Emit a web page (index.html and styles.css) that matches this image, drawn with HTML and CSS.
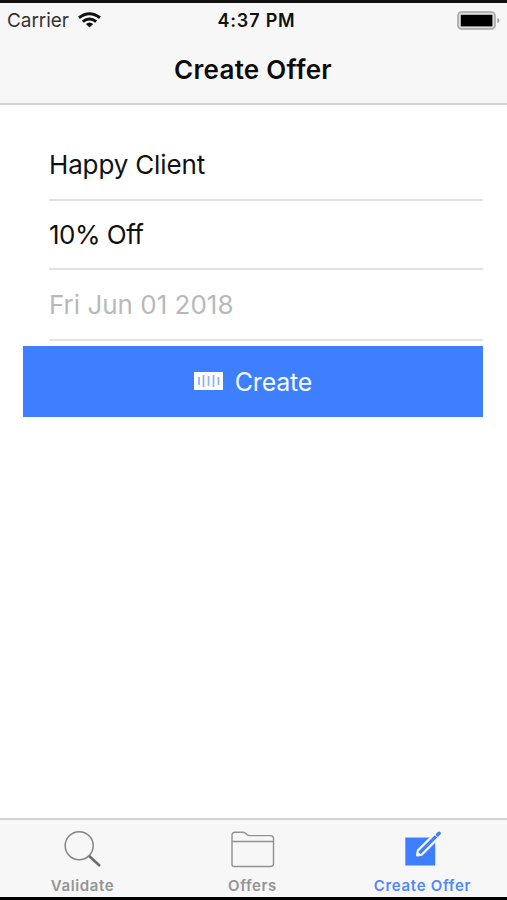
FILE: index.html
```html
<!DOCTYPE html>
<html lang="en">
<head>
<meta charset="utf-8">
<title>Create Offer</title>
<link rel="stylesheet" href="styles.css">
</head>
<body>
<div class="screen">
  <header class="header">
    <div class="status">
      <div class="carrier">
        <span class="carrier-name">Carrier</span>
        <svg class="wifi" width="23" height="16" viewBox="0 0 23 16" fill="none" stroke="#111" stroke-width="3">
          <path d="M1 5.8Q11.5-2.4 22 5.8"/>
          <path d="M4.8 9.7Q11.5 4.2 18.2 9.7"/>
          <path d="M7.9 12Q11.5 9 15.1 12L11.5 15.6Z" fill="#111" stroke="none"/>
        </svg>
      </div>
      <span class="time">4:37 PM</span>
      <svg class="battery" width="43" height="19" viewBox="0 0 43 19">
        <rect x="1" y="1" width="37" height="17" rx="3.5" fill="#dedede" stroke="#a3a3a3" stroke-width="1.5"/>
        <rect x="3.8" y="3.8" width="31.6" height="11.6" fill="#000"/>
        <path d="M40.3 7Q42.3 7.3 42.3 9.5T40.3 12Z" fill="#999"/>
      </svg>
    </div>
    <h1 class="title">Create Offer</h1>
  </header>
  <main class="form">
    <div class="field name">Happy Client</div>
    <div class="field discount">10% Off</div>
    <div class="field date">Fri Jun 01 2018</div>
    <button class="create" type="button">
      <svg class="barcode" width="29" height="18" viewBox="0 0 29 18">
        <path fill="#fff" d="M0 0h29v18H0z"/>
        <path d="M5 5v8M9.5 3v12M14.5 4v10M19.5 3v12M24.5 5v8" stroke="#8bb0ff" stroke-width="1.7"/>
      </svg>
      <span class="create-label">Create</span>
    </button>
  </main>
  <nav class="tabs">
    <div class="tab">
      <svg class="icon" width="46" height="40" viewBox="0 0 46 40" fill="none" stroke="#858585">
        <circle cx="19.2" cy="16.7" r="14" stroke-width="1.5"/>
        <path d="M29.2 27L40 37" stroke="#6c6c6c" stroke-width="2.5"/>
      </svg>
      <span class="label validate">Validate</span>
    </div>
    <div class="tab">
      <svg class="icon" width="46" height="40" viewBox="0 0 46 40" fill="none" stroke="#929292" stroke-width="1.4">
        <path d="M2 35.5V6Q2 3.2 4.8 3.2H13Q15 3.2 16.2 4.8T19.5 6.6H40.5Q43.5 6.6 43.5 9.5V34.5Q43.5 37.5 40.5 37.5H4.5Q2 37.5 2 35.5ZM2 12.5H43.5"/>
      </svg>
      <span class="label offers">Offers</span>
    </div>
    <div class="tab active">
      <svg class="icon" width="46" height="40" viewBox="0 0 46 40" fill="none">
        <path d="M5.3 8.5H35.2V36.5H5.3Z" fill="#3d7fff"/>
        <path d="M17.3 26.2L18 21.6L35 4.6L38.8 8.4L21.8 25.4Z" fill="#f7f7f7" stroke="#f7f7f7" stroke-width="2.6" stroke-linejoin="round"/>
        <path d="M19.4 24L36 7.4" stroke="#3d7fff" stroke-width="3.3"/>
        <path d="M37.6 5.8L39.1 4.3" stroke="#3d7fff" stroke-width="3.6" stroke-linecap="round"/>
      </svg>
      <span class="label create-offer">Create Offer</span>
    </div>
  </nav>
</div>
</body>
</html>
```
FILE: styles.css
```css
* { box-sizing: border-box; }
body {
  margin: 0;
  font-family: Inter, "Liberation Sans", sans-serif;
  color: #111;
  background: #fff;
}
.screen {
  height: 900px;
  display: flex;
  flex-direction: column;
  border-top: 3px solid #111;
  border-bottom: 3px solid #000;
  overflow: hidden;
}
.header {
  height: 102px;
  background: #f7f7f7;
  border-bottom: 2px solid #d2d2d2;
}
.status {
  height: 34px;
  display: grid;
  grid-template-columns: 1fr auto 1fr;
  align-items: center;
  padding: 0 7px 0 7px;
}
.carrier { display: flex; align-items: center; gap: 9px; }
.carrier-name { font-size: 19px; letter-spacing: -0.05px; color: #333; }
.time { margin-left: 6px; font-size: 18px; font-weight: 600; letter-spacing: 0.8px; }
.battery { justify-self: end; }
.title {
  margin: 0;
  height: 66px;
  line-height: 65px;
  text-align: center;
  font-size: 26px;
  font-weight: 600;
  letter-spacing: 0.27px;
  text-indent: -1px;
  color: #0c0c0c;
}
.form { flex: 1; padding: 26px 24px 0 23px; }
.field {
  height: 70px;
  margin-left: 26px;
  line-height: 67px;
  font-size: 26px;
  border-bottom: 2px solid #e2e2e2;
  white-space: nowrap;
}
.name { letter-spacing: -0.15px; }
.discount { height: 69px; letter-spacing: -0.5px; }
.date { height: 71px; line-height: 69px; color: #b9b9b9; }
.create {
  display: flex;
  align-items: center;
  justify-content: center;
  gap: 12px;
  width: 100%;
  height: 71px;
  margin-top: 5px;
  padding: 0;
  border: 0;
  background: #3d7fff;
  color: #f4f8ff;
  font: 25px Inter, "Liberation Sans", sans-serif;
}
.create-label { letter-spacing: -0.2px; }
.barcode { margin-bottom: 2px; }
.tabs {
  height: 79px;
  display: grid;
  grid-template-columns: repeat(3, 170px);
  margin-top: auto;
  padding-top: 9px;
  background: #f7f7f7;
  border-top: 2px solid #d2d2d2;
}
.tab {
  display: flex;
  flex-direction: column;
  align-items: center;
  margin-left: -5px;
}
.label {
  margin-top: 7px;
  font-size: 15px;
  line-height: 20px;
  font-weight: 600;
  letter-spacing: 0.6px;
  color: #949494;
}
.active .label { color: #5288fa; letter-spacing: 0.7px; }
```
